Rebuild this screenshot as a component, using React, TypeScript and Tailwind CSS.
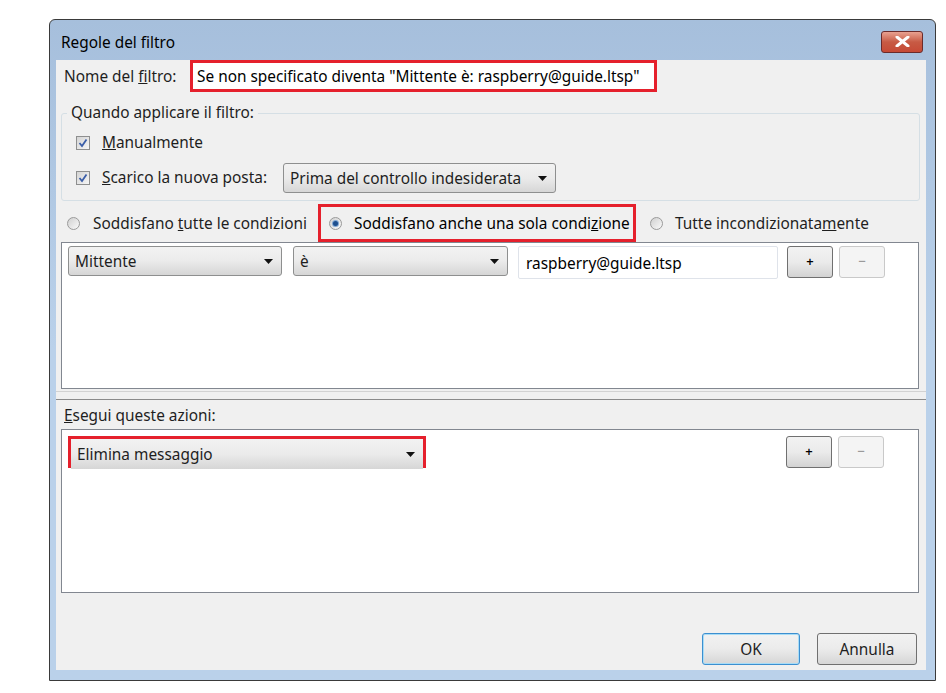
import React from "react"

const font = { fontFamily: '"Noto Sans", "Open Sans", sans-serif' }

function Check() {
  return (
    <span className="w-[14px] h-[14px] border border-[#8e8f8f] bg-gradient-to-br from-[#d4d4d4] to-[#f6f6f6] flex items-center justify-center">
      <svg width="10" height="10" viewBox="0 0 10 10">
        <path d="M1.5 5 L4 8 L8.5 1.5" fill="none" stroke="#3b5ea8" strokeWidth="1.8" />
      </svg>
    </span>
  )
}

function Radio({ on }: { on?: boolean }) {
  return (
    <span className="w-[13px] h-[13px] shrink-0 rounded-full border border-[#9a9a9a] bg-gradient-to-br from-[#d0d0d0] to-[#fafafa] flex items-center justify-center">
      {on && <span className="w-[5px] h-[5px] rounded-full bg-[#1e4f8e] ring-1 ring-[#7fa6d3]" />}
    </span>
  )
}

function Arrow() {
  return (
    <svg width="9" height="5" viewBox="0 0 9 5">
      <path d="M0 0 H9 L4.5 5 Z" fill="#111" />
    </svg>
  )
}

function Select({ label, w, className = "" }: { label: string; w: string; className?: string }) {
  return (
    <div
      className={`${w} h-[30px] rounded-[3px] border border-[#8e8f8f] bg-gradient-to-b from-[#f2f2f2] via-[#ebebeb] to-[#d6d6d6] flex items-center justify-between pl-[6px] pr-[8px] ${className}`}
    >
      <span className="pt-[2px]">{label}</span>
      <Arrow />
    </div>
  )
}

function SmallBtn({ label, disabled }: { label: string; disabled?: boolean }) {
  return (
    <div
      className={`w-[46px] h-[32px] rounded-[3px] border flex items-center justify-center text-[13px] font-semibold ${
        disabled
          ? "border-[#c9c9c9] bg-[#f4f4f4] text-[#9a9a9a] font-normal"
          : "border-[#707070] bg-gradient-to-b from-[#f2f2f2] via-[#ebebeb] to-[#d3d3d3] text-black"
      }`}
    >
      {label}
    </div>
  )
}

export default function App() {
  return (
    <div className="min-h-screen bg-white pl-[49px] pt-[19px] text-[15.4px] text-[#1e1e1e]" style={font}>
      <div className="w-[887px] h-[662px] border border-[#3a3a3a] rounded-t-[6px] bg-gradient-to-b from-[#a6bfdc] via-[#bad1ea] to-[#bad1ea] flex flex-col">
        {/* title bar */}
        <div className="h-[40px] flex items-center justify-between pl-[11px] pr-[12px] pt-[6px]">
          <span className="text-black">Regole del filtro</span>
          <div className="w-[42px] h-[22px] mb-[3px] rounded-[3px] border border-[#6b2b2b] bg-gradient-to-b from-[#e8a191] via-[#c75a44] to-[#c64a36] flex items-center justify-center">
            <svg width="15" height="11" viewBox="0 0 15 11">
              <path d="M2 1 L13 10 M13 1 L2 10" stroke="#fff" strokeWidth="3" strokeLinecap="round" />
            </svg>
          </div>
        </div>

        {/* client area */}
        <div className="ml-[6px] mr-[9px] h-[610px] bg-[#f0f0f0] flex flex-col">
          {/* filter name */}
          <div className="flex items-center h-[32px]">
            <span className="ml-[8px] w-[126px] pt-[1px]">
              Nome del <u>f</u>iltro:
            </span>
            <div className="w-[467px] h-[32px] border-[3px] border-[#e5202c] bg-white flex items-center pl-[4px] pt-[1px] text-black whitespace-nowrap">
              Se non specificato diventa "Mittente è: raspberry@guide.ltsp"
            </div>
          </div>

          {/* group box */}
          <div className="relative mt-[21px] ml-[5px] w-[859px] h-[88px] border border-[#d5dfe5] rounded-[3px]">
            <span className="absolute left-[5px] top-[-12px] bg-[#f0f0f0] px-[4px] leading-[22px]">
              Quando applicare il filtro:
            </span>
            <div className="flex flex-col pl-[14px] pt-[19px] gap-[15px]">
              <div className="flex items-center gap-[12px] h-[20px]">
                <Check />
                <span>
                  <u>M</u>anualmente
                </span>
              </div>
              <div className="flex items-center h-[20px]">
                <Check />
                <span className="ml-[12px]">
                  <u>S</u>carico la nuova posta:
                </span>
                <Select label="Prima del controllo indesiderata" w="w-[273px]" className="ml-[16px]" />
              </div>
            </div>
          </div>

          {/* match radios */}
          <div className="flex items-center h-[38px] mt-[3px] ml-[11px] whitespace-nowrap">
            <Radio />
            <span className="ml-[13px] pt-[1px]">
              Soddisfano <u>t</u>utte le condizioni
            </span>
            <div className="ml-[11px] w-[318px] h-[38px] border-[3px] border-[#e5202c] flex items-center pl-[8px]">
              <Radio on />
              <span className="ml-[12px] pt-[1px] text-black">
                Soddisfano anche una sola condi<u>z</u>ione
              </span>
            </div>
            <span className="ml-[14px] flex">
              <Radio />
            </span>
            <span className="ml-[12px] pt-[1px]">
              Tutte incondizionata<u>m</u>ente
            </span>
          </div>

          {/* conditions list */}
          <div className="ml-[5px] w-[858px] h-[147px] border border-[#828790] bg-white flex items-start pt-[3px] pl-[6px]">
            <Select label="Mittente" w="w-[214px]" />
            <Select label="è" w="w-[215px]" className="ml-[11px]" />
            <div className="ml-[10px] w-[260px] h-[33px] border border-[#dfe3ea] rounded-[2px] flex items-center pl-[7px] pt-[2px] text-black">
              raspberry@guide.ltsp
            </div>
            <div className="ml-[9px] flex gap-[6px]">
              <SmallBtn label="+" />
              <SmallBtn label="−" disabled />
            </div>
          </div>

          {/* splitter */}
          <div className="mt-[2px] h-[9px] border-t border-[#d2d2d2] border-b border-b-[#8a8a8a]" />

          {/* actions */}
          <div className="h-[28px] flex items-center ml-[8px] mt-[1px] pt-[1px]">
            <span>
              <u>E</u>segui queste azioni:
            </span>
          </div>
          <div className="ml-[5px] w-[858px] h-[164px] border border-[#828790] bg-white flex items-start justify-between pt-[6px] pl-[6px] pr-[34px]">
            <div className="w-[358px] h-[32px] border-[3px] border-[#e5202c] flex">
              <Select label="Elimina messaggio" w="w-full" className="h-[26px] rounded-none border-0" />
            </div>
            <div className="flex gap-[6px]">
              <SmallBtn label="+" />
              <SmallBtn label="−" disabled />
            </div>
          </div>

          {/* buttons */}
          <div className="mt-[40px] flex justify-end gap-[17px] pr-[9px]">
            <div className="w-[98px] h-[32px] rounded-[3px] border border-[#3c8fd0] ring-1 ring-inset ring-[#a8dcf6] bg-gradient-to-b from-[#f2f2f2] via-[#ebebeb] to-[#d6d6d6] flex items-center justify-center pt-[2px]">
              OK
            </div>
            <div className="w-[100px] h-[32px] rounded-[3px] border border-[#707070] bg-gradient-to-b from-[#f2f2f2] via-[#ebebeb] to-[#d6d6d6] flex items-center justify-center pt-[2px]">
              Annulla
            </div>
          </div>
        </div>
      </div>
    </div>
  )
}
